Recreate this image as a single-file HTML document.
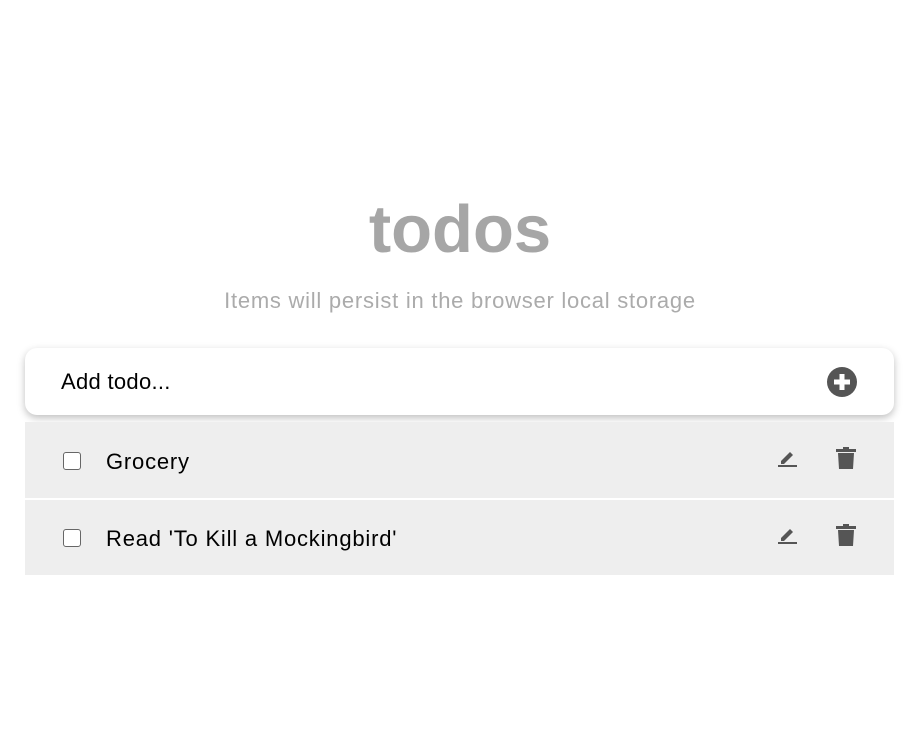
<!DOCTYPE html>
<html><head><style>
body{margin:0;width:908px;height:748px;background:#fff;font-family:"Liberation Sans",sans-serif;position:relative;overflow:hidden}
.t{position:absolute;left:0;width:920px;text-align:center;color:#a6a6a6}
h1{margin:0;position:absolute;top:191px;left:0;width:920px;text-align:center;font-size:67px;font-weight:bold;color:#a6a6a6}
.sub{top:288px;font-size:22px;letter-spacing:0.75px;color:#ababab}
.card{position:absolute;left:25px;top:348px;width:869px;height:67px;background:#fff;border-radius:12px;box-shadow:0 3px 8px rgba(0,0,0,.25)}
.card span{position:absolute;left:36px;top:21px;font-size:22px;color:#000;letter-spacing:0.3px}
.row{position:absolute;left:25px;width:869px;height:76px;background:#eeeeee}
.cb{position:absolute;left:38px;width:16px;height:16px;border:1.5px solid #666;border-radius:3px;background:#fff}
.row span{position:absolute;left:81px;font-size:22px;color:#000;letter-spacing:0.8px}
svg{position:absolute}
</style></head><body>
<h1>todos</h1>
<div class="t sub">Items will persist in the browser local storage</div>
<div class="card"><span>Add todo...</span>
<svg style="left:802px;top:19px" width="30" height="30" viewBox="0 0 30 30"><circle cx="15" cy="15" r="15" fill="#555"/><rect x="7" y="12.5" width="16" height="5" fill="#fff"/><rect x="12.5" y="7" width="5" height="16" fill="#fff"/></svg>
</div>
<div class="row" style="top:422px"><div class="cb" style="top:30px"></div><span style="top:27px">Grocery</span>
<svg style="left:752px;top:26px" width="22" height="20" viewBox="0 0 22 20"><path d="M4 13 L13 4 L16 7 L7 16 L4 16Z" fill="#555"/><rect x="1" y="17" width="19" height="2" fill="#555"/></svg>
<svg style="left:810px;top:24px" width="22" height="24" viewBox="0 0 22 24"><rect x="1" y="3" width="20" height="3" fill="#555"/><rect x="8" y="1" width="6" height="3" fill="#555"/><path d="M3 7 H19 L18 23 H4Z" fill="#555"/></svg>
</div>
<div class="row" style="top:499px;border-top:1px solid #fff;height:75px"><div class="cb" style="top:29px"></div><span style="top:26px">Read 'To Kill a Mockingbird'</span>
<svg style="left:752px;top:25px" width="22" height="20" viewBox="0 0 22 20"><path d="M4 13 L13 4 L16 7 L7 16 L4 16Z" fill="#555"/><rect x="1" y="17" width="19" height="2" fill="#555"/></svg>
<svg style="left:810px;top:23px" width="22" height="24" viewBox="0 0 22 24"><rect x="1" y="3" width="20" height="3" fill="#555"/><rect x="8" y="1" width="6" height="3" fill="#555"/><path d="M3 7 H19 L18 23 H4Z" fill="#555"/></svg>
</div>
</body></html>
